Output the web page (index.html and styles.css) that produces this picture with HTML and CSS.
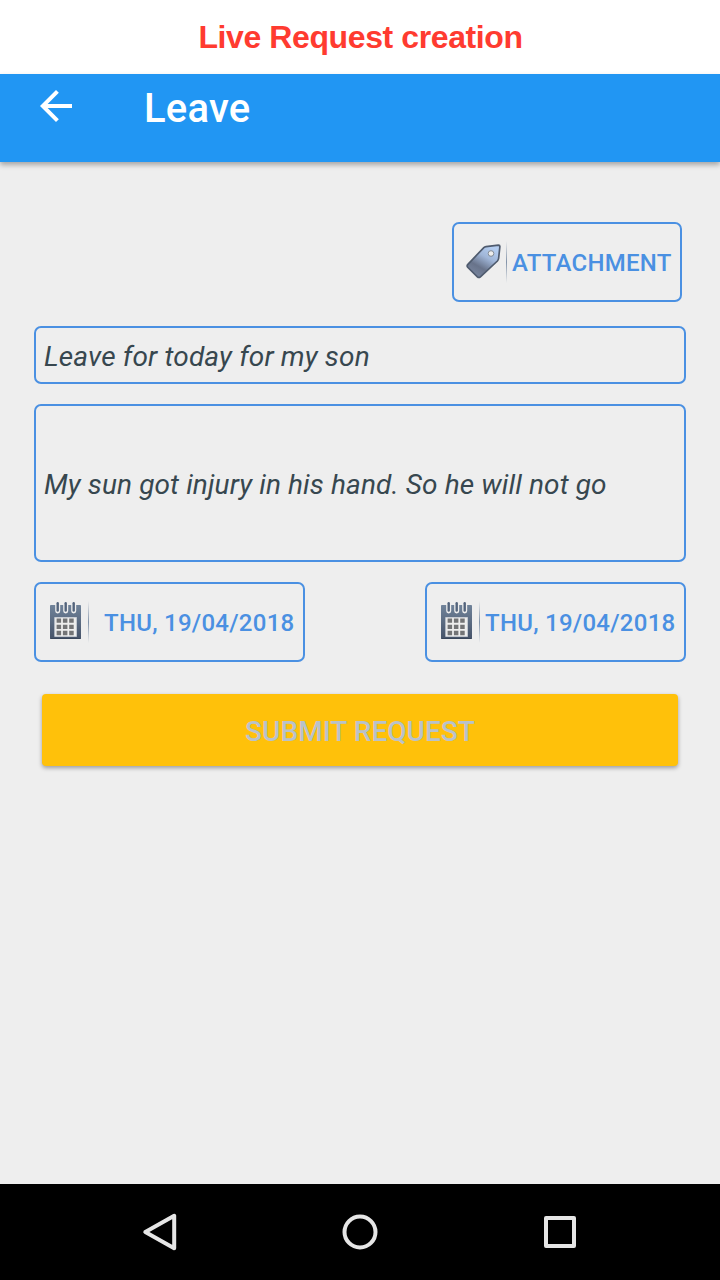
FILE: index.html
```html
<!DOCTYPE html>
<html lang="en">
<head>
<meta charset="utf-8">
<title>Leave</title>
<link rel="stylesheet" href="styles.css">
</head>
<body>
<svg class="defs" width="0" height="0" aria-hidden="true">
  <defs>
    <linearGradient id="calFill" x1="0" y1="0" x2="0" y2="1"><stop offset="0" stop-color="#70839a"/><stop offset="1" stop-color="#465369"/></linearGradient>
    <linearGradient id="tagFill" x1="0.8" y1="0.1" x2="0.3" y2="0.95"><stop offset="0" stop-color="#b4cdf0"/><stop offset="0.35" stop-color="#a0b6d8"/><stop offset="0.72" stop-color="#68738a"/><stop offset="1" stop-color="#76839c"/></linearGradient>
    <symbol id="calendar" viewBox="0 0 31 38">
      <rect y="3" width="31" height="34" rx="0.8" fill="url(#calFill)"/>
      <path d="M0.5 36.5h30" stroke="#39465a" stroke-width="1"/>
      <g fill="#eee"><rect x="5.2" y="1" width="5" height="10.4" rx="2.4"/><rect x="13.2" y="1" width="5" height="10.4" rx="2.4"/><rect x="21.2" y="1" width="5" height="10.4" rx="2.4"/><rect x="4.5" y="15.2" width="22.2" height="19.5"/></g>
      <g fill="#53647c"><rect x="6.5" y="0" width="2.4" height="9.8" rx="1.2"/><rect x="14.5" y="0" width="2.4" height="9.8" rx="1.2"/><rect x="22.5" y="0" width="2.4" height="9.8" rx="1.2"/></g>
      <path d="M4.8 15.5h21.6v19H4.8z" fill="none" stroke="#c5cad1" stroke-width="0.6"/>
      <path d="M6.6 18.7H23.9M6.6 24.9H23.9M6.6 31H23.9" stroke="#737476" stroke-width="4.3" stroke-dasharray="4.5 1.8"/>
    </symbol>
  </defs>
</svg>
<div class="screen">
  <header class="caption">Live Request creation</header>
  <nav class="appbar">
    <svg class="back" width="32" height="32" viewBox="4 4 16 16"><path fill="#fff" d="M20 11H7.83l5.59-5.59L12 4l-8 8 8 8 1.41-1.41L7.83 13H20v-2z"/></svg>
    <h1 class="title">Leave</h1>
  </nav>
  <main class="form">
    <button class="outlined attachment">
      <svg class="tag" width="36" height="36" viewBox="0 0 36 36">
        <path d="M17.8 3.6Q18.6 2.9 20 2.7L32.4 1.2q1.5 0 1.5 1.3L32.6 14.5q-.2 1.4-1.2 2.5L14.4 32.8q-1.5 1.3-3 0L1.9 23.5q-1.5-1.6 0-3.2z" fill="url(#tagFill)" stroke="#4f5b6e" stroke-width="1.7"/>
        <circle cx="25" cy="9.5" r="2.8" fill="#eee" stroke="#7b828b" stroke-width="0.9"/>
      </svg>
      <span class="divider"></span><span class="label">ATTACHMENT</span>
    </button>
    <div class="outlined subject">Leave for today for my son</div>
    <div class="outlined reason">My sun got injury in his hand. So he will not go</div>
    <div class="dates">
      <button class="outlined date from"><svg width="31" height="38"><use href="#calendar"/></svg><span class="divider"></span><span class="label">THU, 19/04/2018</span></button>
      <button class="outlined date to"><svg width="31" height="38"><use href="#calendar"/></svg><span class="divider"></span><span class="label">THU, 19/04/2018</span></button>
    </div>
    <button class="submit">SUBMIT REQUEST</button>
  </main>
  <footer class="navbar">
    <svg width="40" height="40" viewBox="0 0 40 40"><path d="M34.2 3.8v32.4L5.3 20z"/></svg>
    <svg width="40" height="40" viewBox="0 0 40 40"><circle cx="20" cy="20" r="15.5"/></svg>
    <svg width="40" height="40" viewBox="0 0 40 40"><rect x="6" y="6" width="28" height="28"/></svg>
  </footer>
</div>
</body>
</html>
```

FILE: styles.css
```css
* { box-sizing: border-box; }
body { margin: 0; font-family: Roboto, sans-serif; }
.defs { position: absolute; }
.screen { width: 720px; height: 1280px; display: flex; flex-direction: column; background: #eee; overflow: hidden; }
.caption { height: 74px; background: #fff; color: #ff3b30; font: bold 32px/75px "Liberation Sans", sans-serif; letter-spacing: -0.4px; text-align: center; padding-left: 1px; white-space: nowrap; }
.appbar { height: 88px; background: #2196f3; display: flex; align-items: flex-start; padding: 16px 40px 0; gap: 72px; box-shadow: 0 3px 5px rgba(0,0,0,.3); }
.title { margin: -5px 0 0; color: #fff; font-size: 40px; line-height: 48px; font-weight: 500; letter-spacing: .2px; }
.form { flex: 1; padding: 60px 34px 0; display: flex; flex-direction: column; }
button { font-family: inherit; background: none; margin: 0; }
.outlined { border: 2px solid #4a90e2; border-radius: 7px; display: flex; align-items: center; white-space: nowrap; }
.attachment { width: 230px; height: 80px; align-self: flex-end; margin-right: 4px; padding: 0 0 0 12px; }
.label { color: #4a90e2; font-size: 24px; line-height: 28px; font-weight: 500; padding-top: 2px; letter-spacing: .26px; }
.divider { width: 1px; height: 42px; background: linear-gradient(#8293a900, #8293a9 50%, #8293a900); }
.attachment .divider { margin: 0 5px 0 4px; }
.subject, .reason { padding-left: 8px; font-size: 28px; font-style: italic; color: #37474f; }
.subject { height: 58px; margin-top: 24px; padding-top: 2px; letter-spacing: .16px; }
.reason { height: 158px; margin-top: 20px; padding-top: 2px; letter-spacing: .12px; }
.dates { display: flex; justify-content: space-between; margin-top: 20px; }
.date { height: 80px; padding: 0 0 0 14px; }
.date svg { margin-bottom: 2px; }
.date .divider { margin-left: 7px; }
.from { width: 271px; }
.to { width: 261px; }
.from .label { margin-left: 15px; }
.to .label { margin-left: 5px; }
.submit { height: 72px; margin: 32px 8px 0 8px; padding: 3px 0 0; border: 0; border-radius: 4px; background: #ffc10a; color: #b9c2ca; font-size: 28px; font-weight: 500; letter-spacing: .05px; box-shadow: 0 2px 4px rgba(0,0,0,.34); }
.navbar { height: 96px; background: #000; display: flex; justify-content: center; align-items: center; gap: 160px; }
.navbar svg { fill: none; stroke: #e6e6e6; stroke-width: 4; stroke-linejoin: round; }
```
